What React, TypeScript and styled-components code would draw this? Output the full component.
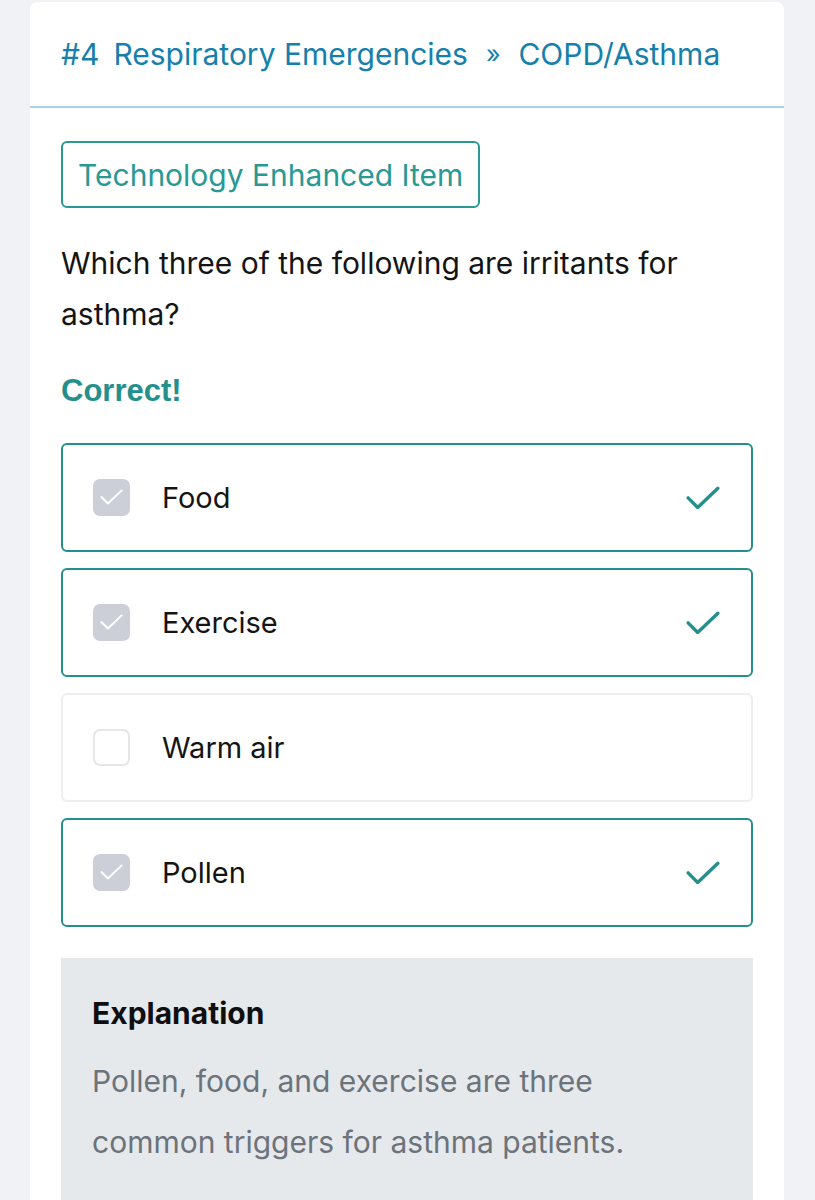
import styled, { createGlobalStyle } from 'styled-components'

interface Choice {
  id: number;
  label: string;
  selected: boolean;
}

const choices: Choice[] = [
  { id: 1, label: 'Food', selected: true },
  { id: 2, label: 'Exercise', selected: true },
  { id: 3, label: 'Warm air', selected: false },
  { id: 4, label: 'Pollen', selected: true },
];

const GlobalStyle = createGlobalStyle`
  body {
    margin: 0;
    background: #f1f2f6;
    font-family: Inter, "Noto Sans", sans-serif;
  }
`

const TickIcon = ({ size, color, stroke }: { size: number; color: string; stroke: number }) => (
  <svg width={size} height={size * 0.7} viewBox="0 0 32 22" fill="none">
    <path d="M2 11 L11 20 L30 2" stroke={color} strokeWidth={stroke} strokeLinecap="round" strokeLinejoin="round" />
  </svg>
)

export default function App() {
  return (
    <>
      <GlobalStyle />
      <Page>
        <Card>
          <Header>
            <span>#4</span>
            <span>Respiratory Emergencies</span>
            <Sep>»</Sep>
            <span>COPD/Asthma</span>
          </Header>
          <Body>
            <Badge>Technology Enhanced Item</Badge>
            <Question>Which three of the following are irritants for asthma?</Question>
            <Result>Correct!</Result>
            <Options>
              {choices.map(c => (
                <Option key={c.id} $selected={c.selected}>
                  <Box $checked={c.selected}>
                    {c.selected && <TickIcon size={23} color="#ffffff" stroke={2.8} />}
                  </Box>
                  <Label>{c.label}</Label>
                  {c.selected && (
                    <RightMark>
                      <TickIcon size={34} color="#25908b" stroke={3.2} />
                    </RightMark>
                  )}
                </Option>
              ))}
            </Options>
            <Explanation>
              <h3>Explanation</h3>
              <p>Pollen, food, and exercise are three common triggers for asthma patients.</p>
            </Explanation>
          </Body>
        </Card>
      </Page>
    </>
  )
}

const Page = styled.div`
  padding: 2px 31px 0 30px;
  height: 1198px;
  overflow: hidden;
`

const Card = styled.div`
  width: 754px;
  background: #ffffff;
  border-radius: 7px 7px 0 0;
  min-height: 1198px;
`

const Header = styled.div`
  height: 106px;
  box-sizing: border-box;
  padding: 0 31px 0;
  display: flex;
  align-items: center;
  gap: 14px;
  border-bottom: 2px solid #a9d2e6;
  color: #1580ac;
  font-size: 30px;
`

const Sep = styled.span`
  margin: 0 4px;
  font-size: 25px;
`

const Body = styled.div`
  padding: 33px 31px 0 31px;
  display: flex;
  flex-direction: column;
  align-items: flex-start;
`

const Badge = styled.div`
  height: 67px;
  box-sizing: border-box;
  border: 2px solid #2a9893;
  border-radius: 6px;
  padding: 0 15px;
  display: flex;
  align-items: center;
  color: #2a9893;
  font-size: 30px;
`

const Question = styled.p`
  margin: 30px 0 0;
  font-size: 30px;
  line-height: 51px;
  color: #141414;
  max-width: 660px;
`

const Result = styled.div`
  margin-top: 33px;
  font-family: "Liberation Sans", Arial, sans-serif;
  font-weight: 700;
  font-size: 31px;
  line-height: 36px;
  color: #25908b;
`

const Options = styled.div`
  margin-top: 34px;
  width: 100%;
  display: flex;
  flex-direction: column;
  gap: 16px;
`

const Option = styled.div<{ $selected: boolean }>`
  height: 109px;
  box-sizing: border-box;
  border: 2px solid ${p => (p.$selected ? '#25908b' : '#eceef0')};
  border-radius: 6px;
  padding: 0 31px 0 30px;
  display: flex;
  align-items: center;
  gap: 32px;
`

const Box = styled.div<{ $checked: boolean }>`
  width: 37px;
  height: 37px;
  box-sizing: border-box;
  border-radius: 7px;
  background: ${p => (p.$checked ? '#ccced8' : '#ffffff')};
  border: 2px solid ${p => (p.$checked ? '#ccced8' : '#e4e6ea')};
  display: flex;
  align-items: center;
  justify-content: center;
  flex-shrink: 0;
`

const Label = styled.span`
  flex: 1;
  font-size: 29px;
  color: #141414;
`

const RightMark = styled.span`
  display: flex;
  align-items: center;
`

const Explanation = styled.div`
  margin-top: 31px;
  width: 100%;
  box-sizing: border-box;
  background: #e6e9ec;
  padding: 37px 31px 40px;
  min-height: 260px;

  h3 {
    margin: 0;
    font-size: 30px;
    font-weight: 700;
    color: #0f0f0f;
  }

  p {
    margin: 20px 0 0;
    font-size: 30px;
    line-height: 61px;
    color: #6c737b;
    max-width: 580px;
  }
`
